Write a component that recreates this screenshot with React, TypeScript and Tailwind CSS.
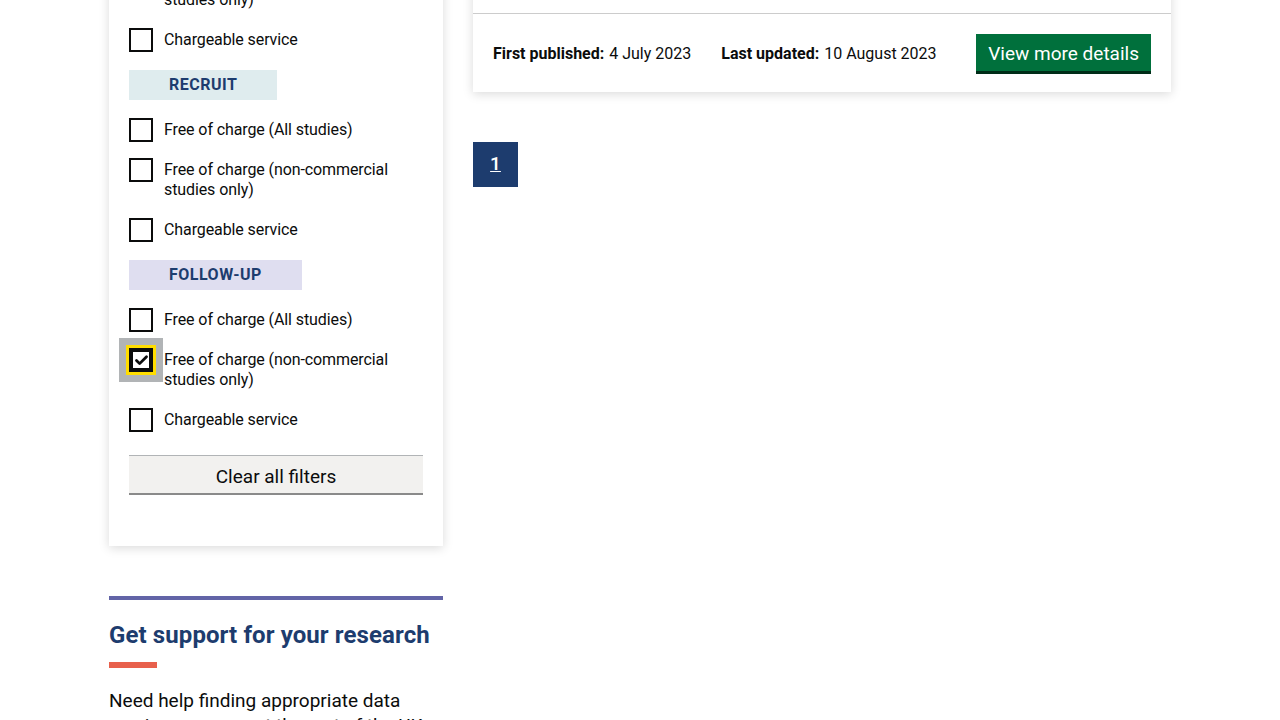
import { Check } from 'lucide-react';

type Item = { label: string; checked?: boolean };

function CheckboxRow({ label, checked }: Item) {
  return (
    <div className="flex items-start">
      <div className="relative w-6 h-6 shrink-0">
        {checked && <div className="absolute -left-[10px] -top-[10px] w-11 h-11 bg-[#b1b4b6]"></div>}
        {checked && <div className="absolute -left-[3px] -top-[3px] w-[30px] h-[30px] bg-[#ffdd00]"></div>}
        <div className={`relative w-6 h-6 bg-white flex items-center justify-center ${checked ? 'border-[4px]' : 'border-2'} border-[#0b0c0c]`}>
          {checked && <Check size={15} strokeWidth={4.5} className="text-[#0b0c0c]" />}
        </div>
      </div>
      <span className="ml-[11px] py-[2px] text-base leading-5 tracking-[-0.1px] text-[#0b0c0c] max-w-[240px]">{label}</span>
    </div>
  );
}

function Tag({ text, bg }: { text: string; bg: string }) {
  return (
    <div className="my-[2px]">
      <span className={`inline-block px-10 h-[30px] leading-[30px] font-bold tracking-[0.5px] text-[#1d3c6e] ${bg}`}>{text}</span>
    </div>
  );
}

export default function App() {
  const options = ['Free of charge (All studies)', 'Free of charge (non-commercial studies only)', 'Chargeable service'];

  return (
    <div className="bg-white min-h-screen overflow-hidden" style={{ fontFamily: 'Roboto, "Noto Sans", sans-serif' }}>
      <div className="w-[1062px] mx-auto flex gap-[30px] -mt-[52px] items-start">
        {/* Filters */}
        <div className="w-[334px] shrink-0">
          <div className="bg-white shadow-[0_2px_10px_rgba(0,0,0,0.15)] px-5 pt-5 pb-[51px]">
            <div className="flex flex-col gap-4">
              <CheckboxRow label="Free of charge (non-commercial studies only)" />
              <CheckboxRow label="Chargeable service" />
              <Tag text="RECRUIT" bg="bg-[#dfecee]" />
              {options.map(o => <CheckboxRow key={'r' + o} label={o} />)}
              <Tag text="FOLLOW-UP" bg="bg-[#dfdef0]" />
              <CheckboxRow label={options[0]} />
              <CheckboxRow label={options[1]} checked />
              <CheckboxRow label={options[2]} />
            </div>
            <button className="mt-[23px] w-full h-10 pt-[3px] bg-[#f2f1ef] border-t border-[#b1b4b6] border-b-2 border-b-[#8a8a8a] text-[19px] leading-none text-[#0b0c0c]">
              Clear all filters
            </button>
          </div>

          <div className="mt-[50px] border-t-4 border-[#6264a7] pt-[19px]">
            <h2 className="text-[24px] leading-8 font-bold tracking-[0.1px] text-[#1d3c6e]">Get support for your research</h2>
            <div className="mt-[11px] w-12 h-[6px] bg-[#e8604c]"></div>
            <p className="mt-5 text-[19px] leading-[25px] text-[#0b0c0c]">
              Need help finding appropriate data services or support the rest of the UK research community?
            </p>
          </div>
        </div>

        {/* Results */}
        <div className="w-[698px] shrink-0">
          <div className="bg-white shadow-[0_2px_10px_rgba(0,0,0,0.15)]">
            <div className="h-[66px] border-b border-[#cccccc]"></div>
            <div className="flex items-center justify-between px-5 pt-5 pb-[18px]">
              <div className="flex items-center text-base text-[#0b0c0c]">
                <span className="font-bold">First published:</span>
                <span className="ml-[5px]">4 July 2023</span>
                <span className="font-bold ml-[30px]">Last updated:</span>
                <span className="ml-[5px]">10 August 2023</span>
              </div>
              <button className="h-10 px-3 bg-[#00703c] border-b-[3px] border-[#002d18] text-white text-[19px] leading-none pt-[2px]">
                View more details
              </button>
            </div>
          </div>

          <div className="mt-[50px] flex">
            <a className="w-[45px] h-[45px] bg-[#1d3c6e] text-white text-[19px] font-medium underline flex items-center justify-center">1</a>
          </div>
        </div>
      </div>
    </div>
  );
}
